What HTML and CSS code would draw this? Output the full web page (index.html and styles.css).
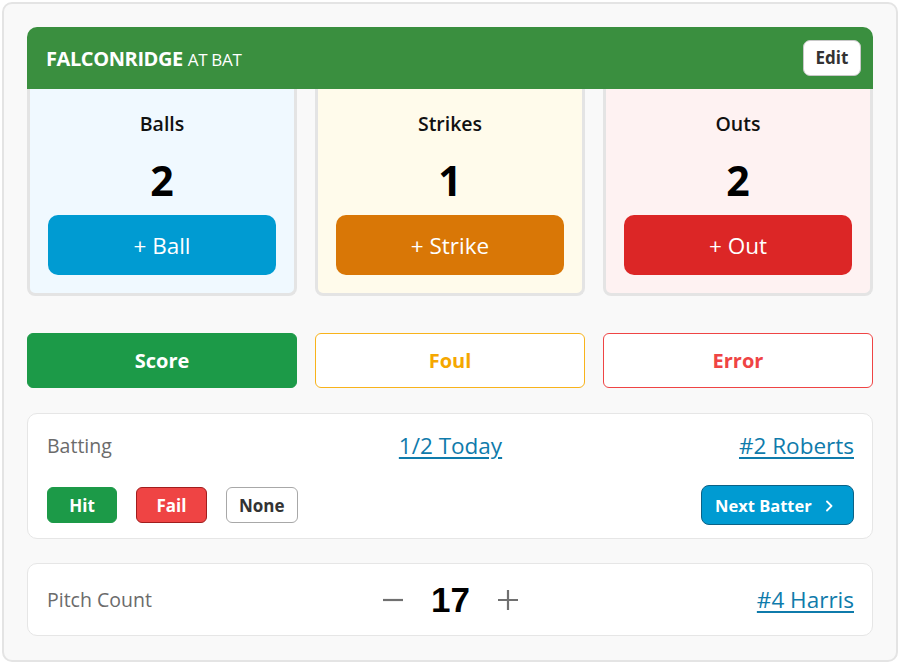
FILE: index.html
```html
<!DOCTYPE html>
<html lang="en">
<head>
<meta charset="utf-8">
<title>At Bat</title>
<link rel="stylesheet" href="styles.css">
</head>
<body>
<div class="app">
  <header class="bar">
    <div class="team"><span class="team-name">FALCONRIDGE</span> <span class="team-sub">AT BAT</span></div>
    <button class="edit">Edit</button>
  </header>

  <section class="counts">
    <div class="count count-ball">
      <div class="count-label">Balls</div>
      <div class="count-value">2</div>
      <button class="count-btn btn-ball">+ Ball</button>
    </div>
    <div class="count count-strike">
      <div class="count-label">Strikes</div>
      <div class="count-value">1</div>
      <button class="count-btn btn-strike">+ Strike</button>
    </div>
    <div class="count count-out">
      <div class="count-label">Outs</div>
      <div class="count-value">2</div>
      <button class="count-btn btn-out">+ Out</button>
    </div>
  </section>

  <section class="actions">
    <button class="action action-score">Score</button>
    <button class="action action-foul">Foul</button>
    <button class="action action-error">Error</button>
  </section>

  <section class="panel batting">
    <div class="row-top">
      <span class="muted">Batting</span>
      <a class="link center" href="#">1/2 Today</a>
      <a class="link right" href="#">#2 Roberts</a>
    </div>
    <div class="row-bottom">
      <div class="results">
        <button class="chip chip-hit">Hit</button>
        <button class="chip chip-fail">Fail</button>
        <button class="chip chip-none">None</button>
      </div>
      <button class="next">Next Batter
        <svg class="chev" width="10" height="14" viewBox="0 0 10 14" aria-hidden="true"><path d="M3 2.5 L7.5 7 L3 11.5" fill="none" stroke="#fff" stroke-width="1.8" stroke-linecap="round" stroke-linejoin="round"/></svg>
      </button>
    </div>
  </section>

  <section class="panel pitch">
    <span class="muted">Pitch Count</span>
    <div class="stepper">
      <button class="step" aria-label="decrease">
        <svg width="22" height="22" viewBox="0 0 22 22"><path d="M1 11 H21" stroke="#707070" stroke-width="2.2"/></svg>
      </button>
      <span class="pitch-value">17</span>
      <button class="step" aria-label="increase">
        <svg width="22" height="22" viewBox="0 0 22 22"><path d="M1 11 H21 M11 1 V21" stroke="#707070" stroke-width="2.2"/></svg>
      </button>
    </div>
    <a class="link right" href="#">#4 Harris</a>
  </section>
</div>
</body>
</html>
```

FILE: styles.css
```css
* { box-sizing: border-box; }
html, body { margin: 0; padding: 0; background: #ffffff; }
body { font-family: "Open Sans", "Noto Sans", "Liberation Sans", sans-serif; color: #111; }
button { font-family: inherit; cursor: pointer; }

.app {
  margin: 2px;
  height: 660px;
  border: 2px solid #e4e4e4;
  border-radius: 10px;
  background: #f9f9f9;
  padding: 23px;
}

.bar {
  height: 62px;
  background: #3a8f3f;
  border-radius: 10px 10px 0 0;
  display: flex;
  align-items: center;
  justify-content: space-between;
  padding: 0 12px 0 19px;
  color: #fff;
}
.team { font-size: 20px; letter-spacing: -0.4px; padding-top: 1px; }
.team-name { font-weight: 700; }
.team-sub { font-weight: 400; font-size: 17px; letter-spacing: -0.3px; }
.edit {
  width: 58px; height: 36px;
  background: #fff;
  border: 1px solid #c8c8c8;
  border-radius: 7px;
  font-size: 17px; font-weight: 700; color: #333;
  padding: 0;
  margin-top: -1px;
}

.counts {
  display: grid;
  grid-template-columns: repeat(3, 1fr);
  gap: 18px;
}
.count {
  height: 207px;
  border: 3px solid #e4e4e4;
  border-top: 0;
  border-radius: 0 0 8px 8px;
  padding: 22px 18px 0;
  display: flex;
  flex-direction: column;
  align-items: center;
}
.count-ball { background: #f0f9ff; }
.count-strike { background: #fffbeb; }
.count-out { background: #fef2f2; }
.count-label { font-size: 19.5px; font-weight: 600; line-height: 26px; color: #111; }
.count-value { font-size: 41px; font-weight: 700; line-height: 48px; margin-top: 19px; color: #000; }
.count-btn {
  margin-top: 11px;
  width: 100%;
  height: 60px;
  border: 0;
  border-radius: 10px;
  color: #fff;
  font-size: 22.5px;
  font-weight: 400;
}
.btn-ball { background: #009bd2; }
.btn-strike { background: #d97706; }
.btn-out { background: #dc2626; }

.actions {
  margin-top: 37px;
  display: grid;
  grid-template-columns: repeat(3, 1fr);
  gap: 18px;
}
.action {
  height: 55px;
  border-radius: 6px;
  font-size: 20px;
  font-weight: 700;
  background: #fff;
}
.action-score { background: #1c9a48; border: 1px solid #1c9a48; color: #fff; }
.action-foul { border: 1px solid #f8b31b; color: #f5a700; }
.action-error { border: 1px solid #ef4444; color: #ef4444; }

.panel {
  background: #fff;
  border: 1px solid #e6e6e6;
  border-radius: 10px;
}
.batting {
  margin-top: 25px;
  padding: 17px 18px 13px 19px;
}
.row-top {
  display: grid;
  grid-template-columns: 1fr auto 1fr;
  align-items: center;
  line-height: 30px;
}
.muted { color: #6b6b6b; font-size: 19.5px; }
.link { color: #0f7bab; font-size: 22.5px; text-decoration: underline; text-underline-offset: 3px; }
.center { text-align: center; }
.right { justify-self: end; }

.row-bottom {
  margin-top: 24px;
  display: flex;
  align-items: center;
  justify-content: space-between;
}
.results { display: flex; gap: 19px; }
.chip {
  height: 36px;
  min-width: 70px;
  padding: 0 12px;
  border-radius: 6px;
  font-size: 17px;
  font-weight: 700;
}
.chip-hit { background: #1c9a48; border: 1px solid #1c9a48; color: #fff; }
.chip-fail { background: #ef4444; border: 1px solid #a11d1d; color: #fff; width: 71px; }
.chip-none { background: #fff; border: 1px solid #a8a8a8; color: #333; }

.next {
  height: 40px;
  width: 153px;
  background: #009bd2;
  border: 1px solid #0b6287;
  border-radius: 8px;
  color: #fff;
  font-size: 16.5px;
  font-weight: 700;
  display: flex;
  align-items: center;
  justify-content: flex-start;
  gap: 12px;
  padding: 0 0 0 13px;
}
.chev { margin-top: 2px; }

.pitch {
  margin-top: 24px;
  height: 73px;
  display: grid;
  grid-template-columns: 1fr auto 1fr;
  align-items: center;
  padding: 0 18px 0 19px;
}
.stepper { display: flex; align-items: center; gap: 0; }
.step {
  background: none; border: 0; padding: 0;
  width: 22px; height: 22px;
  display: flex;
}
.pitch-value {
  font-family: "Liberation Sans", Arial, sans-serif;
  font-weight: 700;
  font-size: 35px;
  color: #000;
  margin: 0 27px;
  line-height: 40px;
}
```
